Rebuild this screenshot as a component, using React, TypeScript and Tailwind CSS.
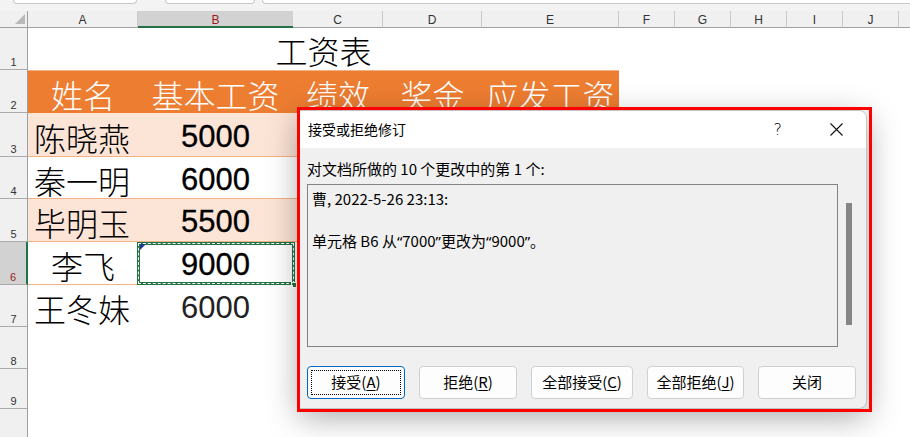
import React from 'react';

const CJK = { fontFamily: '"Noto Sans CJK SC", "Noto Sans", sans-serif' };
const SHEETCJK = { fontFamily: '"Noto Sans CJK SC", "Noto Sans", sans-serif', fontWeight: 300 };
const UI = { fontFamily: '"Liberation Sans", Arial, sans-serif' };
const NUM = { fontFamily: '"Liberation Sans", Arial, sans-serif' };
const Q = { fontFamily: '"Noto Sans", "Liberation Sans", sans-serif' };

const COLS = [
  { k: 'A', w: 'w-[110px]' },
  { k: 'B', w: 'w-[155px]' },
  { k: 'C', w: 'w-[90px]' },
  { k: 'D', w: 'w-[99px]' },
  { k: 'E', w: 'w-[137px]' },
  { k: 'F', w: 'w-[56px]' },
  { k: 'G', w: 'w-[56px]' },
  { k: 'H', w: 'w-[56px]' },
  { k: 'I', w: 'w-[56px]' },
  { k: 'J', w: 'w-[56px]' },
];

const DATA = [
  { n: 3, h: 'h-[44px]', name: '陈晓燕', val: '5000', fill: true, border: true },
  { n: 4, h: 'h-[42px]', name: '秦一明', val: '6000', fill: false, border: true },
  { n: 5, h: 'h-[43px]', name: '毕明玉', val: '5500', fill: true, border: true },
  { n: 6, h: 'h-[43px]', name: '李飞', val: '9000', fill: false, border: true, center: true, selected: true },
  { n: 7, h: 'h-[42px]', name: '王冬妹', val: '6000', fill: false, border: false, light: true },
];

function RowHead({ n, active }: { n?: number; active?: boolean }) {
  return (
    <div
      className={
        active
          ? 'w-[28px] shrink-0 flex items-end justify-center pb-[1px] bg-[#d2d2d2] border-r-2 border-r-[#217346] border-b border-b-[#ababab] text-[11px] leading-[12px] text-[#9c1c1c]'
          : 'w-[28px] shrink-0 flex items-end justify-center pb-[1px] bg-[#f0f0f0] border-r border-r-[#9f9f9f] border-b border-b-[#ababab] text-[11px] leading-[12px] text-[#333]'
      }
      style={UI}
    >
      {n}
    </div>
  );
}

function Btn({ label, acc, w, focus }: { label: string; acc: string; w: string; focus?: boolean }) {
  return (
    <div
      className={
        (focus
          ? 'relative h-[33px] flex items-center justify-center rounded-[4px] bg-[#fdfdfd] border border-[#0067c0] text-[15px] text-black '
          : 'relative h-[33px] flex items-center justify-center rounded-[4px] bg-[#fdfdfd] border border-[#d0d0d0] text-[15px] text-black ') + w
      }
    >
      {focus && <div className="absolute inset-[3px] border border-dotted border-black" />}
      <span>
        {label}(<span className="underline underline-offset-2">{acc}</span>)
      </span>
    </div>
  );
}

export default function App() {
  return (
    <div className="relative w-[910px] h-[437px] overflow-hidden bg-white flex flex-col" style={CJK}>
      {/* top strip */}
      <div className="h-[11px] shrink-0 bg-[#f3f3f3] flex items-start">
        <div className="ml-[13px] w-[124px] h-[4px] bg-white border border-t-0 border-[#c8c8c8] rounded-b-[4px]" />
        <div className="ml-[28px] w-[90px] h-[4px] bg-white border border-t-0 border-[#c8c8c8] rounded-b-[4px]" />
        <div className="ml-[7px] flex-1 -mr-[10px] h-[4px] bg-white border border-t-0 border-[#c8c8c8] rounded-b-[4px]" />
      </div>

      {/* column header */}
      <div className="h-[17px] shrink-0 flex bg-[#f0f0f0]" style={UI}>
        <div className="w-[28px] shrink-0 relative border-r border-r-[#9f9f9f] border-b border-b-[#a0a0a0]">
          <div className="absolute left-[15px] top-[3px] w-0 h-0 border-l-[10px] border-l-transparent border-b-[10px] border-b-[#b9b9b9]" />
        </div>
        {COLS.map((c) =>
          c.k === 'B' ? (
            <div
              key={c.k}
              className={'shrink-0 flex items-center justify-center pt-[2px] bg-[#d2d2d2] border-b-2 border-b-[#217346] text-[12px] text-[#9c1c1c] ' + c.w}
            >
              {c.k}
            </div>
          ) : (
            <div
              key={c.k}
              className={'shrink-0 flex items-center justify-center pt-[2px] border-r border-r-[#c8c8c8] border-b border-b-[#a0a0a0] text-[12px] text-[#333] ' + c.w}
            >
              {c.k}
            </div>
          )
        )}
        <div className="flex-1 border-b border-b-[#a0a0a0]" />
      </div>

      {/* row 1 */}
      <div className="h-[42px] shrink-0 flex">
        <RowHead n={1} />
        <div
          className="w-[591px] shrink-0 flex items-center justify-center text-[32px] leading-none text-black pt-[2px]"
          style={SHEETCJK}
        >
          工资表
        </div>
        <div className="flex-1" />
      </div>

      {/* row 2 */}
      <div className="h-[43px] shrink-0 flex">
        <RowHead n={2} />
        {['姓名', '基本工资', '绩效', '奖金', '应发工资'].map((t, i) => (
          <div
            key={t}
            className={
              'shrink-0 flex items-center justify-center pt-[4px] bg-[#ed7d31] border-t border-t-[#f4b183] text-[32px] leading-none text-white ' +
              COLS[i].w
            }
            style={SHEETCJK}
          >
            {t}
          </div>
        ))}
        <div className="flex-1" />
      </div>

      {/* data rows */}
      {DATA.map((r) => (
        <div key={r.n} className={'shrink-0 flex ' + r.h}>
          <RowHead n={r.n} active={r.selected} />
          <div
            className={
              (r.fill ? 'bg-[#fce4d6] ' : 'bg-white ') +
              (r.border ? 'border-b border-b-[#f4b183] ' : '') +
              (r.center ? 'justify-center ' : 'pl-[6px] ') +
              'w-[110px] shrink-0 flex items-center pt-[4px] text-[32px] leading-none text-black'
            }
            style={SHEETCJK}
          >
            {r.name}
          </div>
          <div
            className={
              (r.fill ? 'bg-[#fce4d6] ' : 'bg-white ') +
              (r.border ? 'border-b border-b-[#f4b183] ' : '') +
              (r.light ? 'text-[#222] ' : 'text-black [-webkit-text-stroke:0.3px_black] ') +
              'relative w-[155px] shrink-0 flex items-center justify-center pt-[3px] text-[31px] leading-none'
            }
            style={NUM}
          >
            {r.val}
            {r.selected && (
              <>
                <div className="absolute -left-[1px] top-0 -right-[2px] -bottom-[1px] border-[3px] border-[#217346]">
                  <div className="absolute -inset-[2px] border border-dashed border-white" />
                </div>
                <div className="absolute left-[2px] top-[2px] w-0 h-0 border-t-[6px] border-t-[#1f3a93] border-r-[6px] border-r-transparent" />
                <div className="absolute -right-[4px] -bottom-[4px] w-[6px] h-[6px] bg-[#217346] border border-white" />
              </>
            )}
          </div>
          {['w-[90px]', 'w-[99px]', 'w-[137px]'].map((w) => (
            <div
              key={w}
              className={
                (r.fill ? 'bg-[#fce4d6] ' : 'bg-white ') + (r.border ? 'border-b border-b-[#f4b183] ' : '') + 'shrink-0 ' + w
              }
            />
          ))}
          <div className="flex-1" />
        </div>
      ))}

      <div className="h-[42px] shrink-0 flex">
        <RowHead n={8} />
        <div className="flex-1" />
      </div>
      <div className="h-[40px] shrink-0 flex">
        <RowHead n={9} />
        <div className="flex-1" />
      </div>
      <div className="h-[40px] shrink-0 flex">
        <RowHead />
        <div className="flex-1" />
      </div>

      {/* dialog */}
      <div className="absolute left-[299px] top-[110px] w-[568px] h-[299px] rounded-r-[8px] overflow-hidden bg-[#f0f0f0] border border-[#c4c4c4] shadow-[0_8px_32px_rgba(0,0,0,0.35)] flex flex-col text-black">
        <div className="h-[37px] shrink-0 bg-white flex items-center pl-[8px] pr-[23px] text-[14px]">
          <span>接受或拒绝修订</span>
          <span className="ml-auto text-[16px] leading-none" style={{ fontFamily: '"DejaVu Sans", sans-serif', fontWeight: 300 }}>
            ?
          </span>
          <svg className="ml-[48px]" width="13" height="13" viewBox="0 0 13 13">
            <path d="M0.5 0.5 L12.5 12.5 M12.5 0.5 L0.5 12.5" stroke="#111" strokeWidth="1.1" fill="none" />
          </svg>
        </div>
        <div className="flex-1 pl-[7px] pt-[11px] flex flex-col">
          <div className="text-[15px] leading-[20px]">对文档所做的 10 个更改中的第 1 个:</div>
          <div className="mt-[5px] flex">
            <div className="w-[531px] h-[163px] border border-[#838383] px-[4px] pt-[3px] text-[15px] leading-[21px]">
              <div>曹, 2022-5-26 23:13:</div>
              <div>&nbsp;</div>
              <div>
                单元格 B6 从<span style={Q}>“</span>7000<span style={Q}>”</span>更改为<span style={Q}>“</span>9000
                <span style={Q}>”</span>。
              </div>
            </div>
            <div className="ml-[8px] mt-[19px] w-[6px] h-[122px] bg-[#858585]" />
          </div>
          <div className="mt-[19px] flex gap-[14px]">
            <Btn label="接受" acc="A" w="w-[98px]" focus />
            <Btn label="拒绝" acc="R" w="w-[98px]" />
            <Btn label="全部接受" acc="C" w="w-[102px]" />
            <Btn label="全部拒绝" acc="J" w="w-[97px]" />
            <div className="h-[33px] w-[98px] flex items-center justify-center rounded-[4px] bg-[#fdfdfd] border border-[#d0d0d0] text-[15px]">
              关闭
            </div>
          </div>
        </div>
      </div>

      {/* red annotation frame */}
      <div className="absolute left-[297px] top-[107px] w-[575px] h-[305px] border-[3px] border-[#ff0000] pointer-events-none" />
    </div>
  );
}
